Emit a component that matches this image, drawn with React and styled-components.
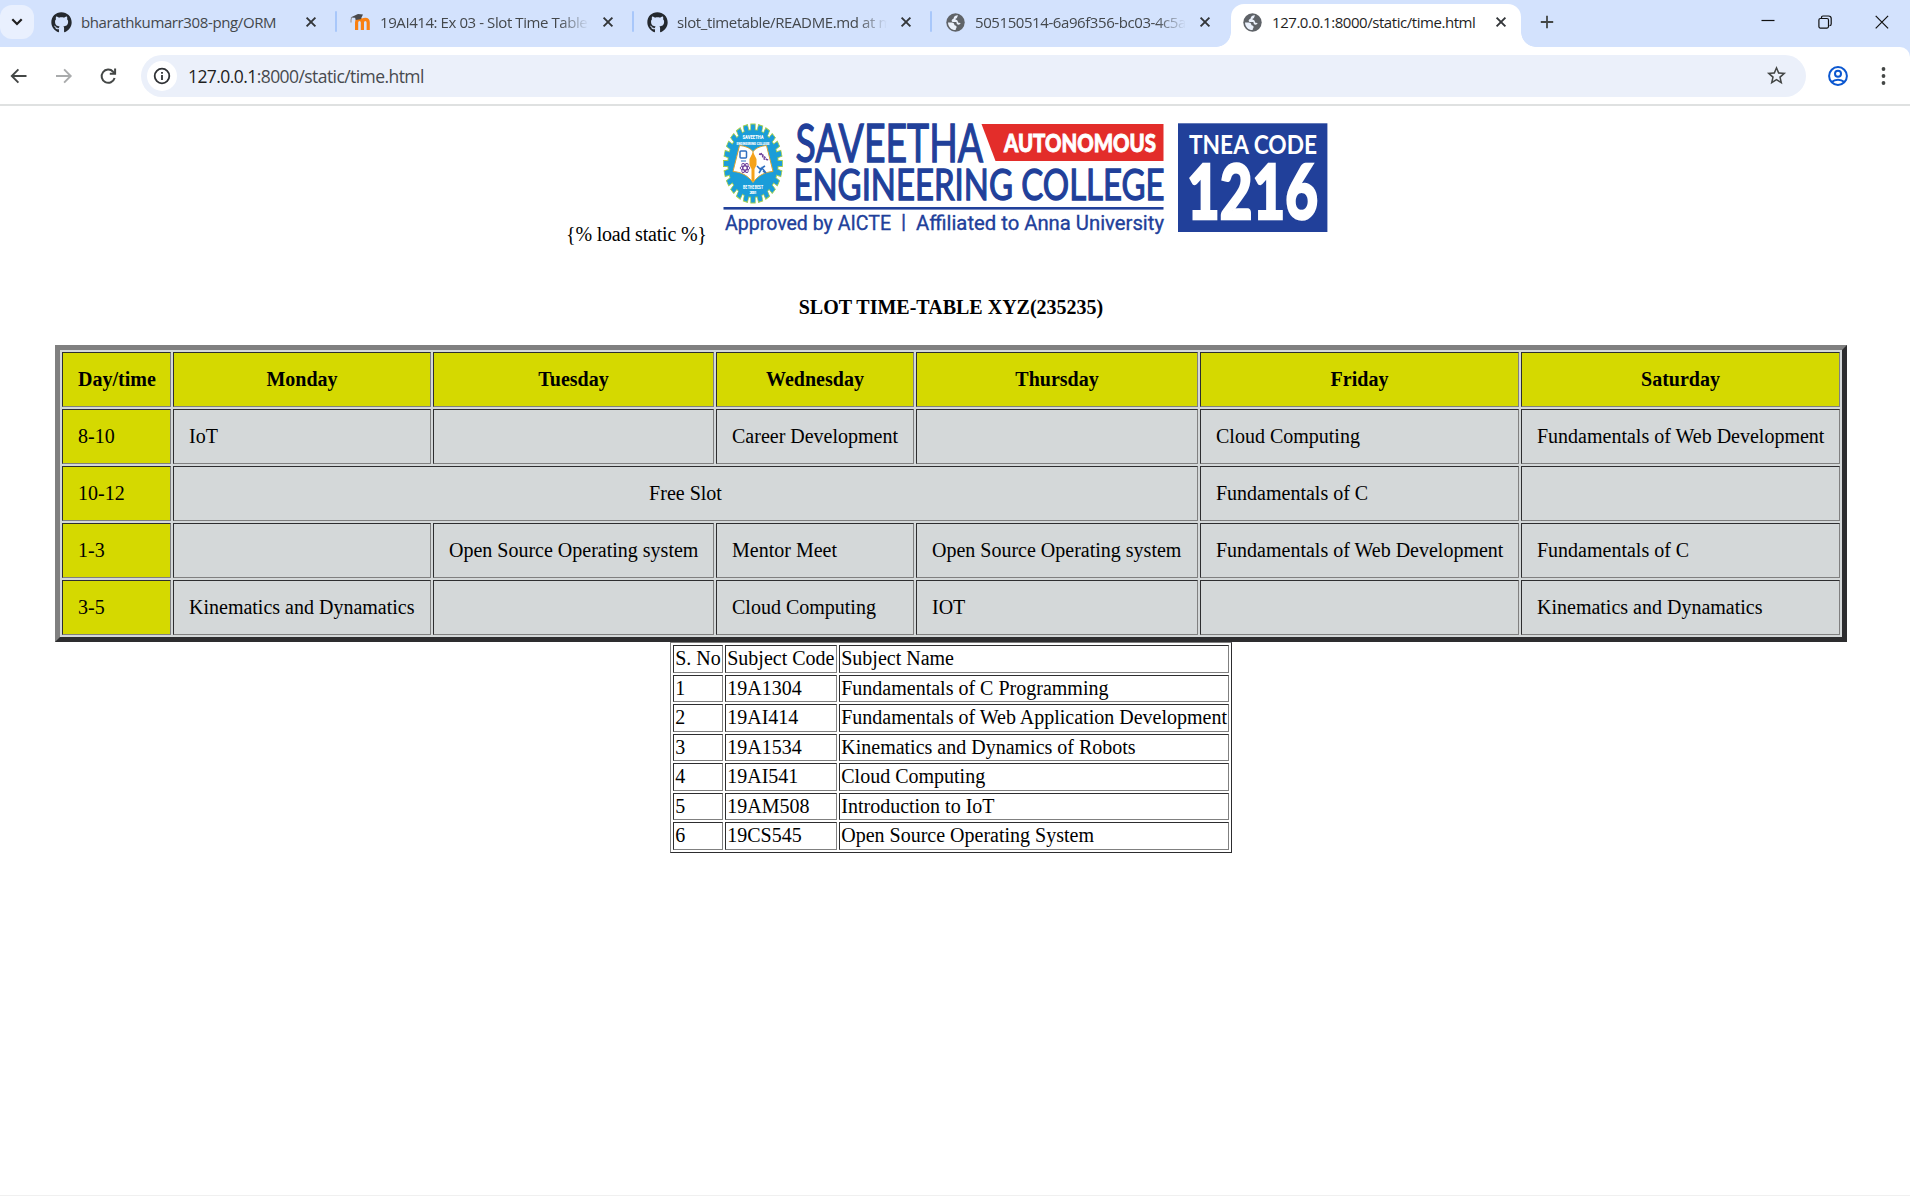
import React from 'react';
import styled, { createGlobalStyle, css } from 'styled-components';
import { FaGithub } from 'react-icons/fa';

const UI_FONT = '"Open Sans", "Noto Sans", sans-serif';
const PAGE_FONT = '"Liberation Serif", "Times New Roman", serif';

const GlobalStyle = createGlobalStyle`
  * { box-sizing: border-box; }
  body { margin: 0; background: #fff; overflow: hidden; }
`;

const Window = styled.div`
  width: 1910px;
  height: 1196px;
  display: flex;
  flex-direction: column;
  background: #fff;
  border-bottom: 1px solid #f0f0f0;
`;

/* ---------- Browser chrome ---------- */

const TabStrip = styled.div`
  height: 47px;
  flex: none;
  display: flex;
  align-items: flex-start;
  background: #d3e2fd;
`;

const TabSearch = styled.div`
  width: 34px;
  height: 34px;
  margin: 5px 4px 0 0;
  border-radius: 12px;
  background: #e9f0fe;
  display: flex;
  align-items: center;
  justify-content: center;
`;

const Tab = styled.div`
  position: relative;
  width: ${(p) => p.$width}px;
  height: 43px;
  margin-top: 4px;
  padding: 0 ${(p) => (p.$active ? 14 : 20)}px 7px ${(p) => (p.$active ? 10 : 12)}px;
  display: flex;
  align-items: center;
  color: #44484c;
  ${(p) =>
    p.$active &&
    css`
      background: #fff;
      border-radius: 13px 13px 0 0;
      color: #1f1f1f;
      &::before,
      &::after {
        content: '';
        position: absolute;
        bottom: 0;
        width: 15px;
        height: 15px;
      }
      &::before {
        left: -15px;
        background: radial-gradient(circle at 0 0, transparent 14.5px, #fff 15.2px);
      }
      &::after {
        right: -15px;
        background: radial-gradient(circle at 100% 0, transparent 14.5px, #fff 15.2px);
      }
    `}
`;

const Favicon = styled.div`
  width: 22px;
  height: 20px;
  flex: none;
  display: flex;
  align-items: center;
  justify-content: center;
  color: #24292f;
`;

const TabTitle = styled.div`
  flex: 1;
  min-width: 0;
  margin: 0 13px 0 9px;
  overflow: hidden;
  white-space: nowrap;
  font: 15px/22px ${UI_FONT};
  letter-spacing: ${(p) => p.$tracking}px;
  ${(p) =>
    p.$fade &&
    css`
      mask-image: linear-gradient(to right, #000 calc(100% - 30px), transparent);
    `}
`;

const CloseSlot = styled.div`
  width: 12px;
  height: 12px;
  flex: none;
  display: flex;
`;

const Separator = styled.div`
  position: absolute;
  right: 0;
  top: 7px;
  width: 2px;
  height: 21px;
  border-radius: 1px;
  background: #a8c7fa;
`;

const NewTab = styled.div`
  width: 14px;
  height: 14px;
  margin: 15px 0 0 19px;
  display: flex;
`;

const WindowControls = styled.div`
  margin-left: auto;
  padding: 15px 21px 0 0;
  display: flex;
  gap: 43px;
`;

const Toolbar = styled.div`
  height: 59px;
  flex: none;
  display: flex;
  align-items: center;
  padding: 0 24px 0 9px;
  background: #fff;
  border-bottom: 2px solid #dfe1e1;
`;

const ToolbarShell = styled.div`
  flex: none;
  background: linear-gradient(#d3e2fd 20px, #fff 20px);
  & > * { border-top-right-radius: 10px; }
`;

const NavButtons = styled.div`
  width: 132px;
  display: flex;
  gap: 25px;
`;

const Omnibox = styled.div`
  width: 1665px;
  height: 42px;
  border-radius: 21px;
  background: #ebf0fa;
  display: flex;
  align-items: center;
  padding: 0 18px 0 6px;
`;

const SiteInfo = styled.div`
  width: 30px;
  height: 30px;
  border-radius: 50%;
  background: #fff;
  display: flex;
  align-items: center;
  justify-content: center;
`;

const Address = styled.div`
  flex: 1;
  margin-left: 11px;
  padding-top: 1px;
  font: 17.5px/26px ${UI_FONT};
  letter-spacing: -0.57px;
  color: #474a4e;
`;

const Host = styled.span`
  color: #1f1f1f;
`;

const ToolbarEnd = styled.div`
  margin-left: auto;
  display: flex;
  align-items: center;
  gap: 33px;
`;

/* ---------- Page ---------- */

const Page = styled.main`
  width: 1902px;
  padding-top: 10px;
  display: flex;
  flex-direction: column;
  align-items: center;
  font: 20px/23px ${PAGE_FONT};
  color: #000;
`;

const Banner = styled.div`
  width: 770px;
  height: 130px;
  display: flex;
  align-items: flex-end;
  white-space: nowrap;
`;

const TemplateTag = styled.span`
  width: 156px;
  letter-spacing: -0.2px;
`;

const BannerLogo = styled.svg`
  display: block;
  align-self: flex-start;
  width: 608px;
  height: 128px;
`;

const Heading = styled.h4`
  margin: 50px 0 26px;
  font-size: 20px;
  line-height: 23px;
  font-weight: bold;
`;

const Timetable = styled.table`
  width: 1792px;
  table-layout: fixed;
  border-collapse: separate;
  border-spacing: 2px;
  border: 5px solid;
  border-color: #808080 #2d2d2f #2d2d2f #808080;
  background: #d4d8d9;
`;

const cellEdges = css`
  border: 1px solid;
  border-color: #2d2d2f #808080 #808080 #2d2d2f;
`;

const HeadCell = styled.th`
  ${cellEdges}
  height: 55px;
  padding: 0 15px;
  background: #d5d900;
  font-weight: bold;
  white-space: nowrap;
`;

const SlotCell = styled.td`
  ${cellEdges}
  height: 55px;
  padding: 0 15px;
  white-space: nowrap;
  text-align: ${(p) => (p.colSpan > 1 ? 'center' : 'left')};
  background: ${(p) => (p.$time ? '#d5d900' : '#d4d8d9')};
`;

const SubjectTable = styled.table`
  width: 562px;
  table-layout: fixed;
  border-collapse: separate;
  border-spacing: 2px;
  border: 1px solid;
  border-color: #808080 #2d2d2f #2d2d2f #808080;
`;

const SubjectCell = styled.td`
  ${cellEdges}
  padding: 1.25px;
  white-space: nowrap;
`;

/* ---------- Icons ---------- */

const Cross = () => (
  <svg width="12" height="12" viewBox="0 0 12 12">
    <path d="M1.6 1.6l8.8 8.8M10.4 1.6l-8.8 8.8" stroke="#333639" strokeWidth="1.9" />
  </svg>
);

const Globe = () => (
  <svg width="19" height="19" viewBox="0 0 19 19">
    <circle cx="9.5" cy="9.5" r="9.2" fill="#5f6368" />
    <path
      d="M11.500 2.200C8.800 2.400 7.600 3.600 7.700 5c0 .7-.5.900-1.100 1.100-1.300.4-1.300 2.700.2 3h2.600c.9 0 1.200.5 1.200 1.200.1 1.100.9 1.400 1.900 1.300 1.700-.1 2.300-1 4.500-.9-.6 3.300-3.600 6.200-7.500 6.200-.5-.8-.3-1.400.1-2 .5-.9.3-1.800-.7-2-.8-.1-1.200-.5-1.200-1.400-.1-1.300-.8-2-2.100-2H1.900c.1 1 .3 1.900.7 2.700"
      fill="none"
    />
    <path
      d="M12 2.300c-2.300-.1-4.200 1.100-4.300 2.700 0 .7-.5.900-1.200 1.200-1.300.6-1.100 2.700.5 2.900h2.500c.9 0 1.200.5 1.200 1.200 0 1.100.9 1.500 1.900 1.400 1-.1 1.300-.8 2.100-1-.6-.8-1.100-.9-2-.9-.5 0-.8-.4-.8-1-.1-1.200-.7-2-1.900-2.100-.7-.1-.7-.9 0-1.100 1.100-.3 1.200-1.500 2-3.300z"
      fill="#eaf0fb"
    />
    <path
      d="M2 9.400h3.800c1.400 0 2.400.8 2.500 2.200 0 .6.400.9 1.100 1 1.300.3 1.500 1.700.8 2.700-.4.600-.6 1.100-.5 1.700C5.800 17.200 2 14 2 9.400z"
      fill="#eaf0fb"
    />
  </svg>
);

const Moodle = () => (
  <svg width="21" height="18" viewBox="0 0 21 18">
    <path
      d="M6.600 17V9.500c0-2 1.100-3.100 2.900-3.100s2.900 1.100 2.900 3.100V17M12.400 17V9.500c0-2 1.100-3.100 2.900-3.100s2.900 1.100 2.900 3.100V17"
      fill="none"
      stroke="#f98012"
      strokeWidth="3.200"
    />
    <path d="M.5 4.400L8 1l5 .6-2.300 4.700-5 .8-.6-2.300z" fill="#4a4a4c" />
    <path d="M1.600 4.500c-.6 2-.8 3-.6 5" stroke="#8a8078" strokeWidth=".9" fill="none" />
  </svg>
);

const Arrow = ({ color, flip }) => (
  <svg width="20" height="20" viewBox="0 0 20 20">
    <path
      d={flip ? 'M2 10h14.500M10.100 3.400L16.700 10l-6.600 6.600' : 'M17.500 10H3M9.400 3.400L2.800 10l6.600 6.600'}
      fill="none"
      stroke={color}
      strokeWidth="1.900"
    />
  </svg>
);

const Reload = () => (
  <svg width="20" height="20" viewBox="0 0 20 20">
    <path d="M15.600 12a6.600 6.600 0 1 1-1.500-6.300L16 7.400" fill="none" stroke="#444746" strokeWidth="2" />
    <path d="M16.100 2.500v5.300h-5.300" fill="none" stroke="#444746" strokeWidth="2" />
  </svg>
);

const Info = () => (
  <svg width="18" height="18" viewBox="0 0 18 18">
    <circle cx="9" cy="9" r="7.300" fill="none" stroke="#303235" strokeWidth="1.800" />
    <path d="M9 8v5M9 4.900v1.900" stroke="#303235" strokeWidth="1.800" />
  </svg>
);

const Star = () => (
  <svg width="23" height="23" viewBox="0 0 24 24">
    <path
      d="M22 9.240l-7.190-.62L12 2 9.190 8.630 2 9.240l5.460 4.730L5.820 21 12 17.270 18.180 21l-1.630-7.030L22 9.240zM12 15.400l-3.760 2.270 1-4.280-3.320-2.880 4.380-.38L12 6.100l1.710 4.040 4.380.38-3.320 2.880 1 4.280L12 15.400z"
      fill="#444746"
    />
  </svg>
);

const Profile = () => (
  <svg width="20" height="22" viewBox="0 0 20 22">
    <g fill="none" stroke="#0b57d0" strokeWidth="2">
      <circle cx="10" cy="11" r="8.900" />
      <circle cx="10" cy="8.800" r="3" />
      <path d="M3.700 17c1.800-1.600 3.900-2.300 6.300-2.300s4.500.7 6.300 2.300" />
    </g>
  </svg>
);

const Dots = () => (
  <svg width="5" height="20" viewBox="0 0 5 20">
    <circle cx="2.500" cy="3" r="1.900" fill="#444746" />
    <circle cx="2.500" cy="10" r="1.900" fill="#444746" />
    <circle cx="2.500" cy="17" r="1.900" fill="#444746" />
  </svg>
);

const FAVICONS = {
  github: <FaGithub size={21} />,
  moodle: <Moodle />,
  globe: <Globe />,
};

/* ---------- College banner ---------- */

const TEETH = Array.from({ length: 24 }, (_, i) => i * 15);

const Crest = () => (
  <g>
    <g transform="translate(753 163.500) scale(.745 1)">
      {TEETH.map((a) => (
        <rect
          key={a}
          x="-3"
          y="-39.500"
          width="6"
          height="9"
          transform={`rotate(${a})`}
          fill="#1b9dd9"
          stroke="#a6cf4c"
          strokeWidth="1"
        />
      ))}
      <circle r="34" fill="#1b9dd9" stroke="#a6cf4c" strokeWidth="1" />
      {TEETH.map((a) => (
        <rect key={a} x="-2.500" y="-37" width="5" height="8" transform={`rotate(${a})`} fill="#1b9dd9" />
      ))}
    </g>
    <path
      d="M739.500 145.500c5 .5 10 2 13.500 6 3.500-4 8.500-5.500 13.500-6l6.500 26c-8 .5-15 4-20 11-5-7-12-10.500-20-11z"
      fill="#fff"
      stroke="#dba536"
      strokeWidth="1"
    />
    <path d="M753 151v31" stroke="#dba536" strokeWidth="1" />
    <path d="M753 152l3.500 7v6l-2 4v12h-3v-12l-2-4v-6z" fill="#f5a21b" />
    <rect x="740" y="151" width="6.500" height="7" rx="1" fill="none" stroke="#2f6fc0" strokeWidth="1.500" />
    <path d="M741 161h5" stroke="#2f6fc0" strokeWidth="1" />
    <g fill="none" stroke="#6a3b97" strokeWidth=".9">
      <ellipse cx="745" cy="168" rx="5" ry="2" />
      <ellipse cx="745" cy="168" rx="5" ry="2" transform="rotate(60 745 168)" />
      <ellipse cx="745" cy="168" rx="5" ry="2" transform="rotate(120 745 168)" />
    </g>
    <path d="M759 154l4 1 4 5M761 153l3 6 5 1" stroke="#6a3b97" strokeWidth="1.400" strokeDasharray="2 1" fill="none" />
    <path d="M757 166l3 3 5-3M759 173l3-5 4 5M763 171l3 2" stroke="#2f6fc0" strokeWidth="1.600" fill="none" />
    <g fill="#fff" fontFamily="Roboto, sans-serif" fontWeight="900" textAnchor="middle">
      <text x="753" y="139" fontSize="5.500" textLength="21" lengthAdjust="spacingAndGlyphs">SAVEETHA</text>
      <text x="753" y="144.500" fontSize="4" textLength="33" lengthAdjust="spacingAndGlyphs">ENGINEERING COLLEGE</text>
      <text x="753" y="189" fontSize="4.500" textLength="20" lengthAdjust="spacingAndGlyphs">BE THE BEST</text>
      <text x="753" y="194" fontSize="4" textLength="7">2001</text>
    </g>
  </g>
);

const CollegeBanner = () => (
  <BannerLogo viewBox="722 116 608 128" role="img">
    <Crest />
    <path d="M981.500 124H1163.500V161H995.500z" fill="#e32d2a" />
    <rect x="723.500" y="207" width="440" height="2.600" fill="#21409a" />
    <rect x="1178" y="123.300" width="149.400" height="108.700" fill="#21409a" />
    <g fill="#21409a" stroke="#21409a" strokeWidth="1.300" fontFamily="Lato, sans-serif">
      <text x="795.500" y="162" fontSize="51.500" fontWeight="400" textLength="187.500" lengthAdjust="spacingAndGlyphs">
        SAVEETHA
      </text>
      <text x="793.500" y="199.500" fontSize="42" fontWeight="400" textLength="371" lengthAdjust="spacingAndGlyphs">
        ENGINEERING COLLEGE
      </text>
    </g>
    <g fill="#21409a" stroke="#21409a" strokeWidth=".35" fontFamily="Roboto, sans-serif" fontSize="21">
      <text x="725" y="230" textLength="166" lengthAdjust="spacingAndGlyphs">Approved by AICTE</text>
      <text x="901" y="229" textLength="6">|</text>
      <text x="916" y="230" textLength="248" lengthAdjust="spacingAndGlyphs">Affiliated to Anna University</text>
    </g>
    <g fill="#fff" fontFamily="Lato, sans-serif">
      <text x="1004" y="151.800" fontSize="25.500" fontWeight="900" textLength="152" lengthAdjust="spacingAndGlyphs" stroke="#fff" strokeWidth=".9">
        AUTONOMOUS
      </text>
      <text x="1189" y="153.500" fontSize="26.500" fontWeight="700" textLength="128" lengthAdjust="spacingAndGlyphs">
        TNEA CODE
      </text>
      <text x="1187" y="219.300" fontSize="77" fontWeight="900" textLength="131" lengthAdjust="spacingAndGlyphs" stroke="#fff" strokeWidth="2.400">
        1216
      </text>
    </g>
  </BannerLogo>
);

/* ---------- Data ---------- */

const TABS = [
  { icon: 'github', title: 'bharathkumarr308-png/ORM', width: 299, tracking: -0.38 },
  { icon: 'moodle', title: '19AI414: Ex 03 - Slot Time Table', width: 297, fade: true, tracking: -0.42 },
  { icon: 'github', title: 'slot_timetable/README.md at main', width: 298, fade: true, tracking: -0.38 },
  { icon: 'globe', title: '505150514-6a96f356-bc03-4c5a-8e21', width: 299, fade: true, tracking: -0.42 },
  { icon: 'globe', title: '127.0.0.1:8000/static/time.html', width: 290, active: true, tracking: -0.45 },
];

const DAYS = ['Day/time', 'Monday', 'Tuesday', 'Wednesday', 'Thursday', 'Friday', 'Saturday'];
const DAY_WIDTHS = [109, 258, 281, 198, 282, 319, 319];

const SLOTS = [
  ['8-10', 'IoT', '', 'Career Development', '', 'Cloud Computing', 'Fundamentals of Web Development'],
  ['10-12', { span: 4, text: 'Free Slot' }, 'Fundamentals of C', ''],
  ['1-3', '', 'Open Source Operating system', 'Mentor Meet', 'Open Source Operating system', 'Fundamentals of Web Development', 'Fundamentals of C'],
  ['3-5', 'Kinematics and Dynamatics', '', 'Cloud Computing', 'IOT', '', 'Kinematics and Dynamatics'],
];

const SUBJECT_WIDTHS = [50, 112, 390];

const SUBJECTS = [
  ['S. No', 'Subject Code', 'Subject Name'],
  ['1', '19A1304', 'Fundamentals of C Programming'],
  ['2', '19AI414', 'Fundamentals of Web Application Development'],
  ['3', '19A1534', 'Kinematics and Dynamics of Robots'],
  ['4', '19AI541', 'Cloud Computing'],
  ['5', '19AM508', 'Introduction to IoT'],
  ['6', '19CS545', 'Open Source Operating System'],
];

const Columns = ({ widths }) => (
  <colgroup>
    {widths.map((w, i) => (
      <col key={i} width={w} />
    ))}
  </colgroup>
);

export default function App() {
  return (
    <Window>
      <GlobalStyle />
      <TabStrip>
        <TabSearch>
          <svg width="12" height="8" viewBox="0 0 12 8">
            <path d="M1.300 1.300L6 6l4.700-4.700" fill="none" stroke="#1f1f1f" strokeWidth="2.200" />
          </svg>
        </TabSearch>
        {TABS.map((t, i) => (
          <Tab key={t.title} $active={t.active} $width={t.width}>
            <Favicon>{FAVICONS[t.icon]}</Favicon>
            <TabTitle $fade={t.fade} $tracking={t.tracking}>{t.title}</TabTitle>
            <CloseSlot>
              <Cross />
            </CloseSlot>
            {i < 3 && <Separator />}
          </Tab>
        ))}
        <NewTab>
          <svg width="14" height="14" viewBox="0 0 14 14">
            <path d="M7 .8v12.400M.8 7h12.400" stroke="#444746" strokeWidth="1.800" />
          </svg>
        </NewTab>
        <WindowControls>
          <svg width="14" height="14" viewBox="0 0 14 14">
            <path d="M.5 5.500h13" stroke="#111" strokeWidth="1.200" />
          </svg>
          <svg width="14" height="14" viewBox="0 0 14 14">
            <rect x=".9" y="3.500" width="9.600" height="9.600" rx="1.500" fill="none" stroke="#111" strokeWidth="1.200" />
            <path d="M3.500 3V2.600C3.500 1.600 4.100 1 5 1h5.500C12.200 1 13.200 2 13.200 3.500V9c0 1-.6 1.700-1.700 1.700" fill="none" stroke="#111" strokeWidth="1.200" />
          </svg>
          <svg width="14" height="14" viewBox="0 0 14 14">
            <path d="M.7 .9l12.400 12.400M13.100.9L.7 13.300" stroke="#111" strokeWidth="1.200" />
          </svg>
        </WindowControls>
      </TabStrip>

      <ToolbarShell>
        <Toolbar>
          <NavButtons>
            <Arrow color="#444746" />
            <Arrow color="#a9abac" flip />
            <Reload />
          </NavButtons>
          <Omnibox>
            <SiteInfo>
              <Info />
            </SiteInfo>
            <Address>
              <Host>127.0.0.1</Host>:8000/static/time.html
            </Address>
            <Star />
          </Omnibox>
          <ToolbarEnd>
            <Profile />
            <Dots />
          </ToolbarEnd>
        </Toolbar>
      </ToolbarShell>

      <Page>
        <Banner>
          <TemplateTag>{'{% load static %}'}</TemplateTag>
          <CollegeBanner />
        </Banner>
        <Heading>SLOT TIME-TABLE XYZ(235235)</Heading>
        <Timetable>
          <Columns widths={DAY_WIDTHS} />
          <tbody>
            <tr>
              {DAYS.map((d) => (
                <HeadCell key={d}>{d}</HeadCell>
              ))}
            </tr>
            {SLOTS.map((row) => (
              <tr key={row[0]}>
                {row.map((cell, i) => (
                  <SlotCell key={i} $time={i === 0} colSpan={cell.span || 1}>
                    {cell.span ? cell.text : cell}
                  </SlotCell>
                ))}
              </tr>
            ))}
          </tbody>
        </Timetable>
        <SubjectTable>
          <Columns widths={SUBJECT_WIDTHS} />
          <tbody>
            {SUBJECTS.map((row) => (
              <tr key={row[0]}>
                {row.map((cell) => (
                  <SubjectCell key={cell}>{cell}</SubjectCell>
                ))}
              </tr>
            ))}
          </tbody>
        </SubjectTable>
      </Page>
    </Window>
  );
}
